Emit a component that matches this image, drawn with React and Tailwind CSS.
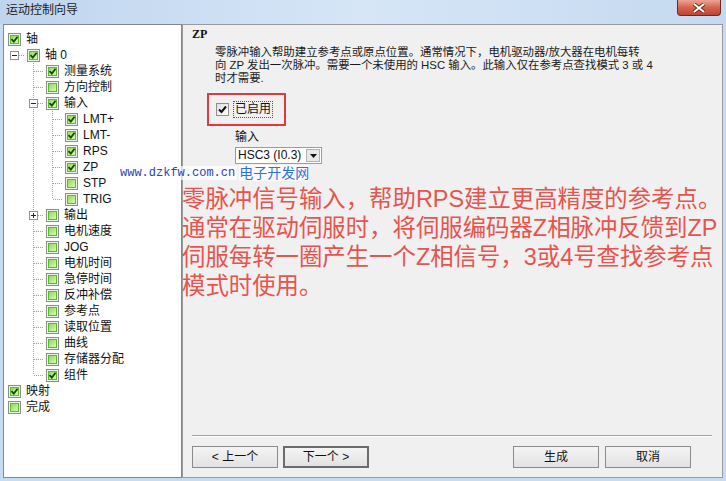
const rows = [
  { l: 0, t: "轴", c: 1 },
  { l: 1, t: "轴 0", c: 1, exp: "-", noUp: 1, last: 1 },
  { l: 2, t: "测量系统", c: 1 },
  { l: 2, t: "方向控制" },
  { l: 2, t: "输入", c: 1, exp: "-" },
  { l: 3, t: "LMT+", c: 1 },
  { l: 3, t: "LMT-", c: 1 },
  { l: 3, t: "RPS", c: 1 },
  { l: 3, t: "ZP", c: 1 },
  { l: 3, t: "STP" },
  { l: 3, t: "TRIG", last: 1 },
  { l: 2, t: "输出", exp: "+" },
  { l: 2, t: "电机速度" },
  { l: 2, t: "JOG" },
  { l: 2, t: "电机时间" },
  { l: 2, t: "急停时间" },
  { l: 2, t: "反冲补偿" },
  { l: 2, t: "参考点" },
  { l: 2, t: "读取位置" },
  { l: 2, t: "曲线" },
  { l: 2, t: "存储器分配" },
  { l: 2, t: "组件", c: 1, last: 1 },
  { l: 0, t: "映射", c: 1 },
  { l: 0, t: "完成" },
];

// 祖先列是否有竖线（level 3 的第 2 列）
const ancestorLine = (l, k) => l === 3 && k === 2;

function Cell({ line, own, up, down, exp }) {
  return (
    <svg width="19" height="16" className="shrink-0">
      <g stroke="#a0a0a0" strokeDasharray="1 1" fill="none">
        {line && <line x1="9.5" y1="0" x2="9.5" y2="16" />}
        {own && up && <line x1="9.5" y1="0" x2="9.5" y2="8" />}
        {own && down && <line x1="9.5" y1="8" x2="9.5" y2="16" />}
        {own && <line x1="10" y1="8.5" x2="19" y2="8.5" />}
      </g>
      {exp && (
        <g>
          <rect x="5.5" y="4.5" width="8" height="8" fill="#fff" stroke="#919191" />
          <line x1="7" y1="8.5" x2="12" y2="8.5" stroke="#222" />
          {exp === "+" && <line x1="9.5" y1="6" x2="9.5" y2="11" stroke="#222" />}
        </g>
      )}
    </svg>
  );
}

function GreenBox({ checked }) {
  return (
    <span className="flex h-[13px] w-[13px] shrink-0 items-center justify-center border border-[#8c8c8c] bg-[#eef8e6]">
      <span className="flex h-[9px] w-[9px] items-center justify-center border border-[#5cb82e] bg-gradient-to-br from-[#8fdc4f] to-[#d6f7b8]">
        {checked ? (
          <svg width="7" height="7" className="overflow-visible">
            <path d="M0.5 3.2 L2.8 5.6 L6.6 0.8" stroke="#15470f" strokeWidth="1.8" fill="none" />
          </svg>
        ) : null}
      </span>
    </span>
  );
}

function TreeRow({ r }) {
  const cells = [];
  for (let k = 1; k <= r.l; k++) {
    if (k < r.l) cells.push(<Cell key={k} line={ancestorLine(r.l, k)} />);
    else cells.push(<Cell key={k} own up={!r.noUp} down={!r.last} exp={r.exp} />);
  }
  return (
    <div className="flex h-[16px] items-center pl-[1px]">
      {cells}
      <span className="ml-[3px]">
        <GreenBox checked={r.c} />
      </span>
      <span className="ml-[5px] whitespace-nowrap text-[12px] leading-[16px] text-[#111]">{r.t}</span>
    </div>
  );
}

function Btn({ children, def }) {
  return (
    <button
      className={
        "flex h-[22px] w-[86px] items-center justify-center bg-gradient-to-b from-[#f4f4f4] to-[#e2e2e2] text-[12px] text-[#111] " +
        (def ? "border-2 border-[#6b6b6b]" : "border border-[#8a8a8a]")
      }
    >
      {children}
    </button>
  );
}

export default function App() {
  return (
    <div className="relative flex h-[481px] w-[726px] flex-col overflow-hidden bg-[#c8dcf1] font-[Liberation_Sans,Noto_Sans_CJK_SC,sans-serif]">
      {/* 标题栏 */}
      <div className="flex h-[24px] shrink-0 items-start bg-gradient-to-r from-[#bfd5ee] via-[#d6e6f7] to-[#c4d9f0]">
        <span className="ml-[6px] mt-[3px] text-[12px] leading-[14px] text-[#1b1b1b]">运动控制向导</span>
        <div className="ml-auto mr-[5px] flex h-[16px] w-[44px] items-center justify-center rounded-b-[4px] border border-t-0 border-[#6e2a22] bg-gradient-to-b from-[#eaa696] via-[#d4644f] to-[#c0432e]">
          <svg width="14" height="10">
            <path d="M2 1 L12 9 M12 1 L2 9" stroke="#5a1a12" strokeWidth="3.6" />
            <path d="M2 1 L12 9 M12 1 L2 9" stroke="#fff" strokeWidth="2.2" />
          </svg>
        </div>
      </div>

      <div className="flex min-h-0 flex-1 px-[3px] pb-[3px]">
        {/* 左侧树 */}
        <div className="w-[179px] shrink-0 border border-[#828790] bg-white pt-[6px]">
          {rows.map((r, i) => (
            <TreeRow key={i} r={r} />
          ))}
        </div>

        {/* 右侧面板 */}
        <div className="flex flex-1 flex-col border border-[#9a9a9a] bg-[#f0f0f0]">
          <div className="pl-[9px] pt-[3px]">
            <div className="h-[13px] font-[Liberation_Serif,serif] text-[12px] font-bold leading-[13px] text-[#111]">ZP</div>
            <div className="ml-[23px] mt-[5px] whitespace-nowrap text-[11.4px] leading-[13px] text-[#1a1a1a]">
              <div>零脉冲输入帮助建立参考点或原点位置。通常情况下，电机驱动器/放大器在电机每转</div>
              <div>向 ZP 发出一次脉冲。需要一个未使用的 HSC 输入。此输入仅在参考点查找模式 3 或 4</div>
              <div>时才需要.</div>
            </div>

            <div className="ml-[15px] mt-[8px] flex h-[33px] w-[79px] items-center border-2 border-[#e0393e] pl-[7px]">
              <span className="flex h-[13px] w-[13px] items-center justify-center border border-[#8e8f8f] bg-gradient-to-br from-[#dedede] to-white">
                <svg width="9" height="9">
                  <path d="M1 4.5 L3.5 7 L8 1.5" stroke="#111" strokeWidth="2" fill="none" />
                </svg>
              </span>
              <span className="ml-[4px] border border-dotted border-[#555] px-[1px] text-[12px] leading-[15px] text-[#111]">已启用</span>
            </div>

            <div className="ml-[43px] mt-[4px] text-[12px] leading-[14px] text-[#111]">输入</div>
            <div className="ml-[43px] mt-[3px] flex h-[17px] w-[87px] items-center border border-[#9c9c9c] bg-white">
              <span className="flex-1 pl-[2px] text-[12px] leading-[15px] text-[#111]">HSC3 (I0.3)</span>
              <span className="mr-[1px] flex h-[13px] w-[14px] items-center justify-center border border-[#b0b0b0] bg-[#e8e8e8]">
                <svg width="7" height="4">
                  <path d="M0 0 H7 L3.5 4 Z" fill="#111" />
                </svg>
              </span>
            </div>
          </div>

          <div className="-ml-[1px] mt-[21px] whitespace-nowrap text-[23.4px] leading-[29px] text-[#e9534d]">
            <div>零脉冲信号输入，帮助RPS建立更高精度的参考点。</div>
            <div>通常在驱动伺服时，将伺服编码器Z相脉冲反馈到ZP</div>
            <div>伺服每转一圈产生一个Z相信号，3或4号查找参考点</div>
            <div>模式时使用。</div>
          </div>

          <div className="mt-auto px-[9px] pb-[9px]">
            <div className="mr-[1px] border-t border-[#a0a0a0] border-b border-b-white" />
            <div className="mt-[9px] flex">
              <Btn>&lt; 上一个</Btn>
              <span className="ml-[5px]">
                <Btn def>下一个 &gt;</Btn>
              </span>
              <span className="ml-auto">
                <Btn>生成</Btn>
              </span>
              <span className="ml-[6px] mr-[22px]">
                <Btn>取消</Btn>
              </span>
            </div>
          </div>
        </div>
      </div>

      {/* 水印 */}
      <div className="absolute left-[118px] top-[165px] flex items-center">
        <span className="bg-white/70 px-[2px] font-[Liberation_Mono,monospace] text-[12px] leading-[14px] text-[#2b3fc4]">www.dzkfw.com.cn</span>
        <span className="ml-[2px] bg-white/80 text-[14px] leading-[16px] text-[#2f6fe6]">电子开发网</span>
      </div>
    </div>
  );
}
